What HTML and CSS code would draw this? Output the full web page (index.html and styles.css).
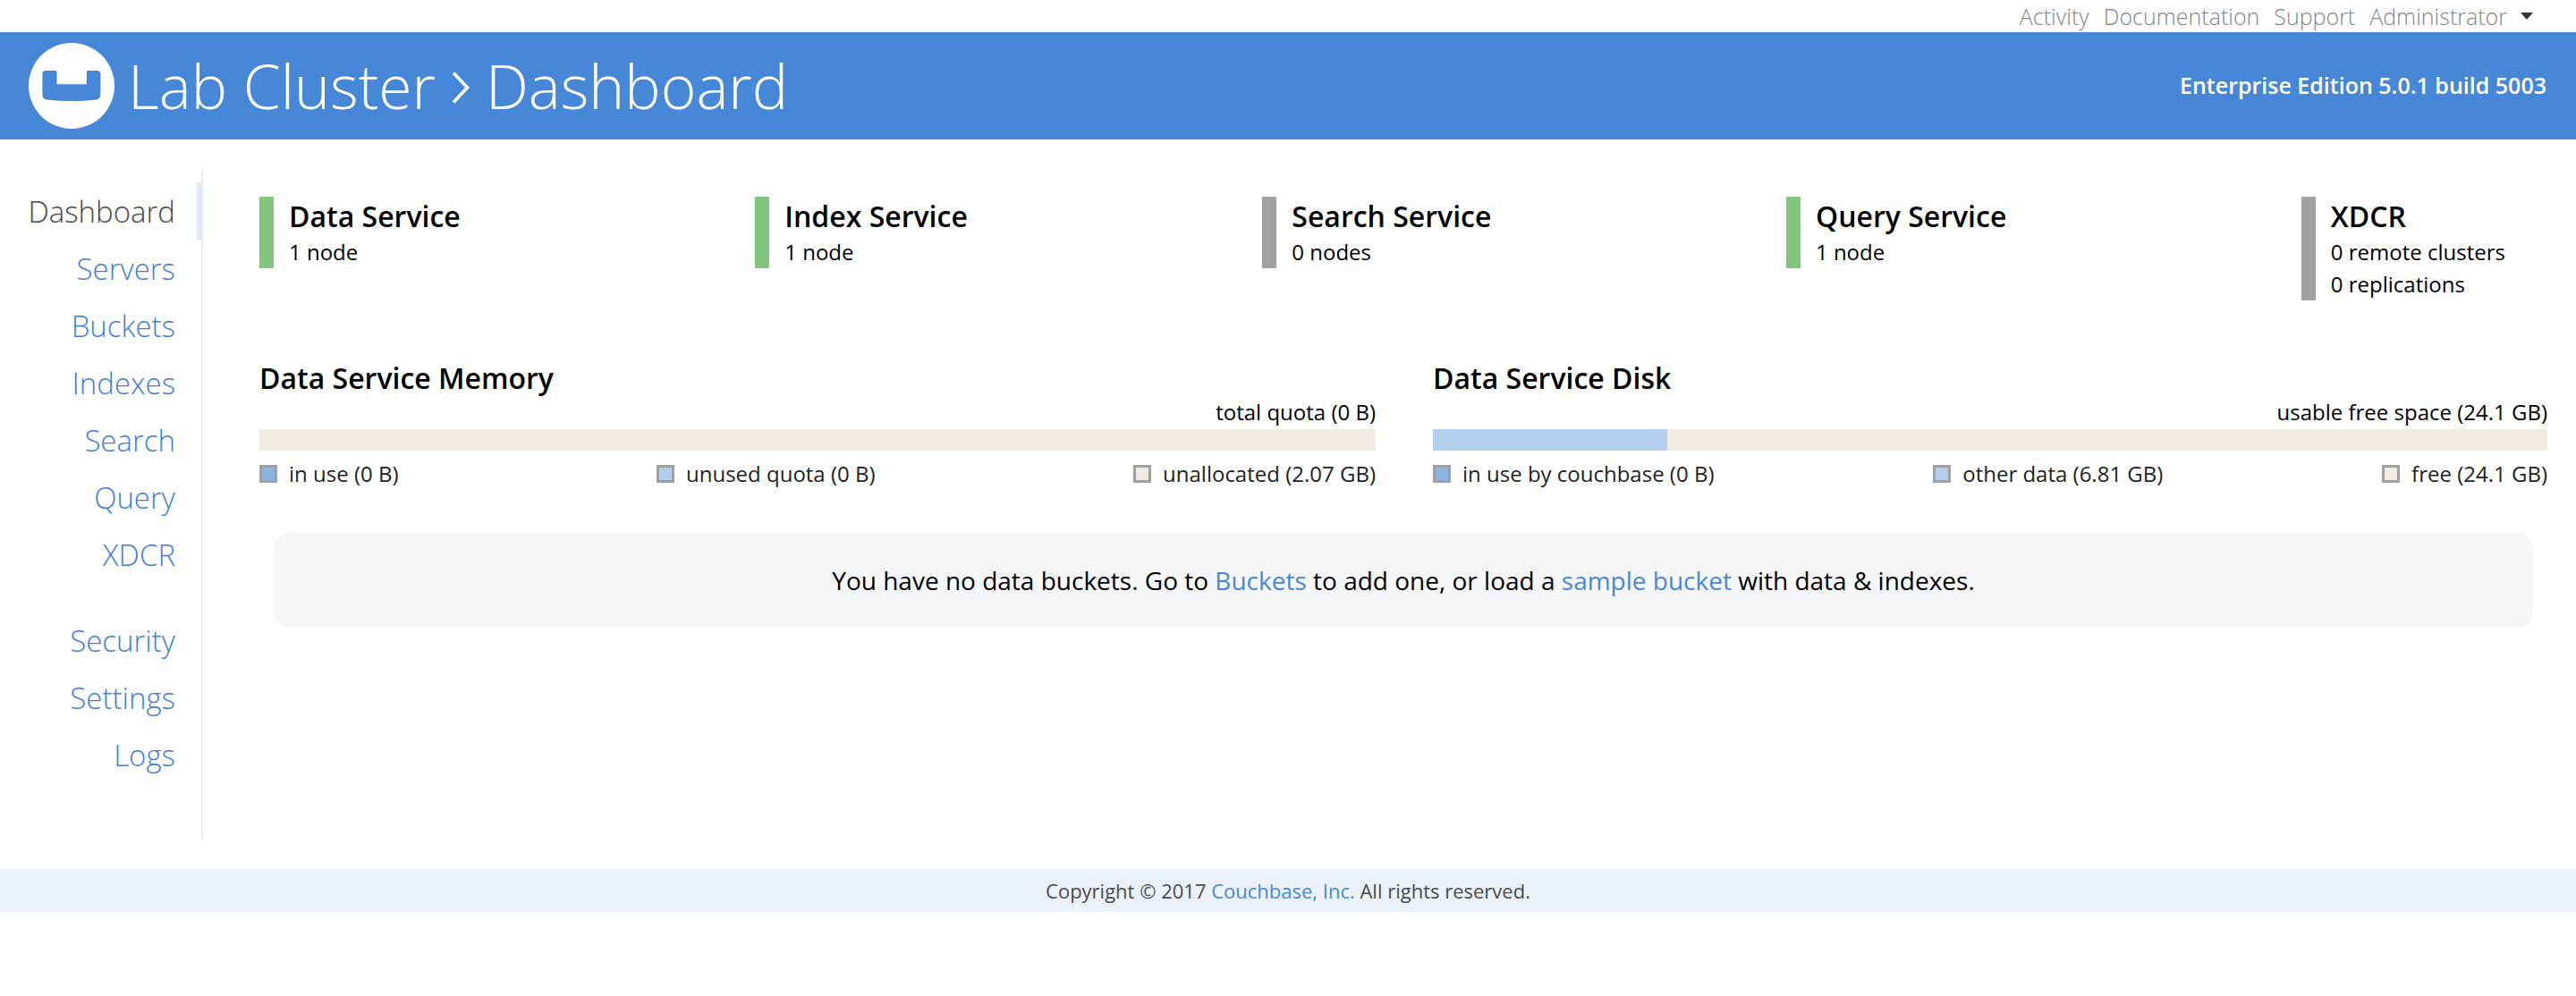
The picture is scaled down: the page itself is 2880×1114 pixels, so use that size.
FILE: index.html
```html
<!DOCTYPE html>
<html lang="en">
<head>
<meta charset="utf-8">
<title>Lab Cluster &gt; Dashboard</title>
<link rel="stylesheet" href="styles.css">
</head>
<body>
<div class="topbar">
  <a class="toplink">Activity</a>
  <a class="toplink">Documentation</a>
  <a class="toplink">Support</a>
  <a class="toplink admin">Administrator<span class="caret"></span></a>
</div>
<header class="header">
  <div class="brand">
    <svg class="logo" width="96" height="96" viewBox="0 0 96 96">
      <circle cx="48" cy="48" r="48" fill="#fff"/>
      <path fill="#4787d7" d="M20 31h7.500a4 4 0 0 1 4 1v14.300h33.400v-14.300a4 4 0 0 1 4-1h7.500q4 0 4 4v23q0 5-5 5.400q-27 3-55 0q-5-.4-5-5.400v-23q0-4 4-4z"/>
    </svg>
    <h1 class="title">Lab Cluster
      <svg class="chev" width="20" height="36" viewBox="0 0 20 36"><path d="M2 1.500L17.500 18L2 34.500" fill="none" stroke="#fff" stroke-width="3.600"/></svg>
      Dashboard</h1>
  </div>
  <div class="edition">Enterprise Edition 5.0.1 build 5003</div>
</header>
<main class="main">
  <nav class="sidebar">
    <div class="navgroup">
      <a class="navitem active">Dashboard</a>
      <a class="navitem">Servers</a>
      <a class="navitem">Buckets</a>
      <a class="navitem">Indexes</a>
      <a class="navitem">Search</a>
      <a class="navitem">Query</a>
      <a class="navitem">XDCR</a>
    </div>
    <div class="navgroup">
      <a class="navitem">Security</a>
      <a class="navitem">Settings</a>
      <a class="navitem">Logs</a>
    </div>
  </nav>
  <section class="content">
    <div class="services">
      <div class="service up"><h2>Data Service</h2><p>1 node</p></div>
      <div class="service up"><h2>Index Service</h2><p>1 node</p></div>
      <div class="service off"><h2>Search Service</h2><p>0 nodes</p></div>
      <div class="service up"><h2>Query Service</h2><p>1 node</p></div>
      <div class="service off"><h2>XDCR</h2><p>0 remote clusters</p><p>0 replications</p></div>
    </div>
    <div class="charts">
      <div class="chart">
        <h3>Data Service Memory</h3>
        <div class="caption">total quota (0 B)</div>
        <div class="bar"></div>
        <div class="legend">
          <span class="key"><i class="sw inuse"></i>in use (0 B)</span>
          <span class="key"><i class="sw unused"></i>unused quota (0 B)</span>
          <span class="key"><i class="sw free"></i>unallocated (2.07 GB)</span>
        </div>
      </div>
      <div class="chart">
        <h3>Data Service Disk</h3>
        <div class="caption">usable free space (24.1 GB)</div>
        <div class="bar"><div class="fill" style="width:21%"></div></div>
        <div class="legend">
          <span class="key"><i class="sw inuse"></i>in use by couchbase (0 B)</span>
          <span class="key"><i class="sw unused"></i>other data (6.81 GB)</span>
          <span class="key"><i class="sw free"></i>free (24.1 GB)</span>
        </div>
      </div>
    </div>
    <div class="notice">You have no data buckets. Go to <a>Buckets</a> to add one, or load a <a>sample bucket</a> with data &amp; indexes.</div>
  </section>
</main>
<footer class="footer">Copyright © 2017 <a>Couchbase, Inc.</a> All rights reserved.</footer>
</body>
</html>
```
FILE: styles.css
```css
* { box-sizing: border-box; }
html, body { margin: 0; padding: 0; background: #fff; }
body { font-family: "Open Sans", sans-serif; font-size: 24px; color: #000; }
a { color: #4787d7; text-decoration: none; }
h1, h2, h3, p { margin: 0; }

.topbar { height: 36px; display: flex; justify-content: flex-end; align-items: center; gap: 16px; padding-right: 48px; }
.toplink { color: #858585; font-size: 25px; font-weight: 300; line-height: 36px; }
.admin { display: flex; align-items: center; color: #858585; }
.caret { width: 0; height: 0; margin-left: 15px; border-left: 7px solid transparent; border-right: 7px solid transparent; border-top: 8px solid #333; }

.header { height: 120px; background: #4787d7; color: #fff; display: flex; justify-content: space-between; align-items: center; padding: 0 33px 0 32px; }
.brand { display: flex; align-items: center; gap: 15px; }
.logo { display: block; }
.title { display: flex; align-items: center; gap: 18px; font-size: 67.800px; font-weight: 300; line-height: 96px; white-space: nowrap; }
.chev { display: block; margin-top: 4px; }
.edition { font-size: 25px; font-weight: 600; margin-bottom: 3px; }

.main { display: flex; padding-top: 32px; align-items: flex-start; }
.sidebar { width: 227px; height: 752px; flex: none; border-right: 2px solid #e9ebed; padding-top: 16px; display: flex; flex-direction: column; gap: 32px; }
.navgroup { display: flex; flex-direction: column; }
.navitem { height: 64px; line-height: 65px; font-size: 33px; font-weight: 300; text-align: right; padding-right: 29px; color: #3f80d4; }
.navitem.active { color: #4a4a4a; box-shadow: inset -5px 0 0 #dfe9f6; }

.content { flex: 1; min-width: 0; padding: 32px 32px 0 63px; }
.services { display: flex; justify-content: space-between; min-height: 116px; align-items: flex-start; width: 2511px; }
.service { padding-left: 17px; border-left: 16px solid #82c57c; min-height: 80px; }
.service.off { border-left-color: #a0a0a0; }
.service h2 { font-size: 32px; font-weight: 600; line-height: 44px; }
.service p { line-height: 36px; }

.charts { display: grid; grid-template-columns: 1248px 1fr; gap: 64px; margin-top: 62px; }
.chart { min-width: 0; }
.chart h3 { font-size: 32px; font-weight: 600; line-height: 50px; }
.caption { text-align: right; line-height: 26px; height: 32px; }
.bar { height: 24px; background: #efebe1; }
.fill { height: 100%; background: #b3cfee; }
.legend { display: flex; justify-content: space-between; margin-top: 14px; line-height: 24px; }
.key { display: flex; align-items: center; color: #222; }
.sw { width: 20px; height: 20px; margin-right: 13px; border: 3px solid #a0a0a0; flex: none; }
.sw.inuse { background: #89b5e6; }
.sw.unused { background: #b3cfee; }
.sw.free { background: #efebe1; }

.notice { margin: 54px 16px 0; height: 106px; display: flex; justify-content: center; align-items: center; white-space: pre; background: #f5f6f8; border-radius: 18px; font-size: 28px; }

.footer { margin-top: 32px; height: 48px; line-height: 48px; background: #ebf2fb; text-align: center; color: #4a4a4a; font-size: 22px; }
```
